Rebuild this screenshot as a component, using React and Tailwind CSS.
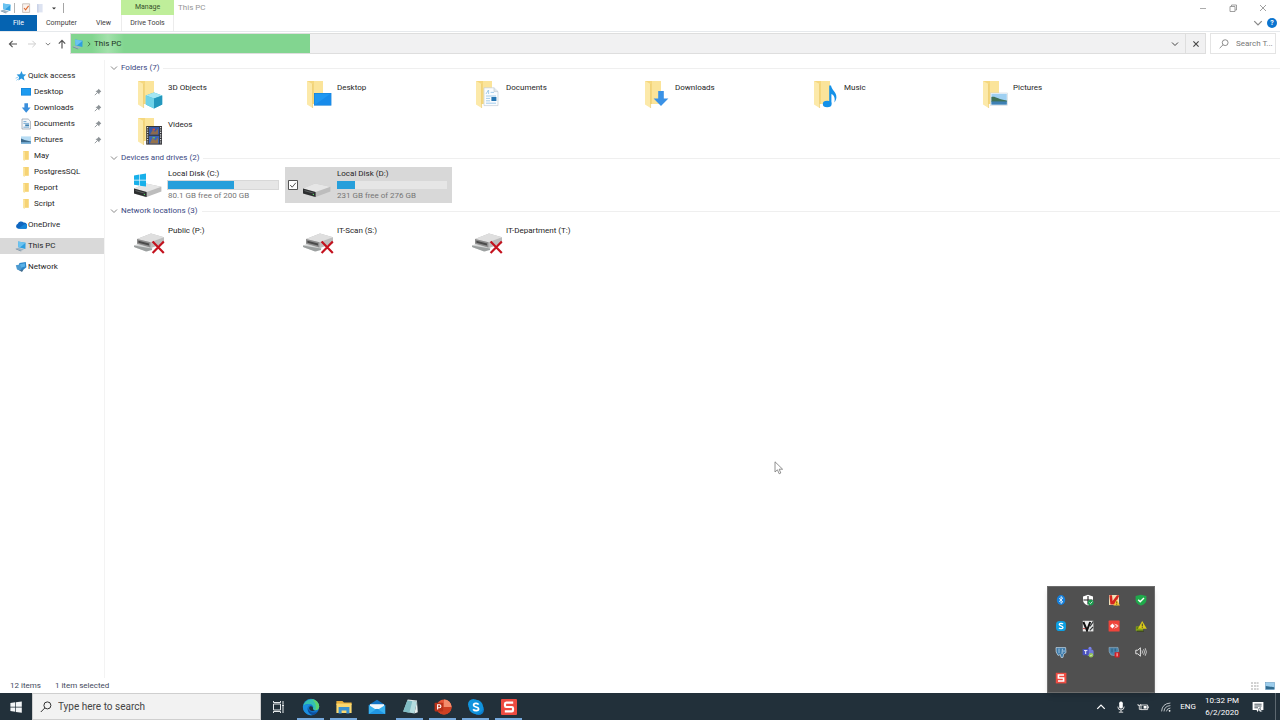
import React, { useState } from 'react';

/* ---------- Small icons ---------- */

const PcIcon = ({ className = 'w-3 h-3' }) => (
  <svg viewBox="0 0 12 12" className={className} aria-hidden="true">
    <path d="M3 1.4 10.6 2.8 10.4 9 3.4 7.2z" fill="#2f9fe0" />
    <path d="M3 1.4 10.6 2.8 5 7.5 3.4 7.2z" fill="#6cc3f0" />
    <path d="M.8 8.6 3.4 7.8 9 9.4 6.2 10.8z" fill="#9fb4c4" />
    <path d="M.8 8.6 6.2 10.8V11.4L.8 9.2z" fill="#6f8aa0" />
  </svg>
);

const Chevron = ({ className }) => (
  <svg viewBox="0 0 8 8" className={className} fill="none" stroke="currentColor" aria-hidden="true">
    <path d="M1 2.5 4 5.5 7 2.5" />
  </svg>
);

const Magnifier = ({ className }) => (
  <svg viewBox="0 0 12 12" className={className} fill="none" stroke="currentColor" aria-hidden="true">
    <circle cx="7.4" cy="4.4" r="3.5" />
    <path d="M4.9 6.9 .8 11" />
  </svg>
);

const Pin = () => (
  <svg viewBox="0 0 8 8" className="w-2 h-2" aria-hidden="true">
    <path d="M4.6.8 7.3 3.4 6.5 3.9 5.4 5.1 5.3 6.6 1.5 3 3 2.8 4.2 1.6z" fill="#8d9397" />
    <path d="M3.4 4.6.8 7.2" stroke="#8d9397" strokeWidth=".9" />
  </svg>
);

const sideIcons = {
  star: (
    <>
      <path d="M6.5 1 7.8 4.2 11.2 4.5 8.7 6.8 9.5 10.4 6.3 8.5 3.4 10.4 4 7 1.6 4.6 5 4.2z" fill="#2a97de" />
      <path d="M.6 8.2 3 7.2M1.4 10.4 3.4 8.8" stroke="#7cc0ee" strokeWidth=".8" />
    </>
  ),
  desktop: (
    <>
      <rect x="1" y="2" width="10" height="7.6" fill="#1487dc" />
      <rect x="1.8" y="2.8" width="8.4" height="6" fill="#1e9bf0" />
    </>
  ),
  downloads: <path d="M4.4 1.2H8V5.6H10.6L6.2 10.8 1.8 5.6H4.4z" fill="#3a8fdc" />,
  documents: (
    <>
      <path d="M2 1H8.2L10.4 3.2V11H2z" fill="#f4f7fa" stroke="#8c9aa6" strokeWidth=".7" />
      <path d="M3.4 3.6H6.4M3.4 5.4H9M3.4 9.2H9" stroke="#5e9ccc" strokeWidth=".8" />
      <path d="M5.2 6.4H9V8.2H5.2z" fill="#3f7fae" />
    </>
  ),
  pictures: (
    <>
      <rect x="1" y="2.4" width="10" height="7.4" fill="#b7dcf4" />
      <path d="M1 4.6 4.6 6 11 7.4V8.4H1z" fill="#3c6a8c" />
      <path d="M1 8.4 11 8V9.8H1z" fill="#6ba6cf" />
    </>
  ),
  folder: (
    <>
      <path d="M3 1H8.8V9.8H3z" fill="#f6d374" />
      <path d="M3 1 4.8 1.8V11L3 9.9z" fill="#fbe5a0" />
    </>
  ),
  onedrive: (
    <>
      <path d="M3.2 9.8A2.6 2.6 0 0 1 2.8 4.8 3.4 3.4 0 0 1 8.6 3.6 3.2 3.2 0 0 1 10 9.8z" fill="#0f66c0" />
      <path d="M3.4 9.8 8.6 5.8A2.4 2.4 0 1 1 9.6 9.8z" fill="#1484d8" />
    </>
  ),
  network: (
    <>
      <path d="M4.4 2 10.8 1 11.4 6.2 7.4 9.4 3.2 8z" fill="#2b86c8" />
      <path d="M5 3.2 9.8 2.2 10.2 5.6 5.4 7z" fill="#59b1e8" />
      <path d="M.8 4.2 4.6 3.6 6.6 7.4 5 9.8 2 8.4z" fill="#4d9ad0" />
      <path d="M4 9.2 8.6 8.4 7 11z" fill="#426f92" />
    </>
  ),
};

const SideIcon = ({ name }) =>
  name === 'pc' ? (
    <PcIcon className="w-3 h-3 shrink-0" />
  ) : (
    <svg viewBox="0 0 12 12" className="w-3 h-3 shrink-0" aria-hidden="true">
      {sideIcons[name]}
    </svg>
  );

/* ---------- Large icons, 32 x 32 ---------- */

const overlays = {
  objects: (
    <>
      <path d="M21 12.4 29.2 15.4V24.6L21 28.4 12.8 24.6V15.4z" fill="#35b6d8" />
      <path d="M21 12.4 29.2 15.4 21 18.6 12.8 15.4z" fill="#a4e6f3" />
      <path d="M12.8 15.4 21 18.6V28.4L12.8 24.6z" fill="#6fd2e8" />
      <path d="M21 18.6 29.2 15.4V24.6L21 28.4z" fill="#2497bd" />
    </>
  ),
  desktop: (
    <>
      <rect x="12" y="13" width="17.4" height="12.6" fill="#1580d8" />
      <path d="M12.6 13.6H28.8V25H12.6z" fill="#1f98f2" />
      <path d="M12.6 25 28.8 13.6V25z" fill="#178bea" />
    </>
  ),
  documents: (
    <>
      <path d="M13 7.8H23L27 11.6V25.6H13z" fill="#fafcfe" stroke="#bcc6ce" strokeWidth=".6" />
      <path d="M23 7.8V11.6H27" fill="#e2e8ec" stroke="#bcc6ce" strokeWidth=".6" />
      <path d="M15 14 17.4 10M17.6 14V10M19.6 12.4H23M15 16H25M15 18.4H19M15 20.8H19M15 23.2H25" stroke="#8dc0e6" strokeWidth=".8" />
      <rect x="20.4" y="17" width="5" height="4" fill="#2777b4" />
    </>
  ),
  downloads: <path d="M18.2 11H23.8V18.6H28.4L21 26 13.6 18.6H18.2z" fill="#3a92e6" />,
  music: (
    <>
      <path d="M20.2 5.4H22C22.6 10 27.8 12 27.4 17.4 27.2 19.4 26.4 21 25.4 22.4 26.4 18 25 15 22.4 14V23.8H20.2z" fill="#1591e8" />
      <ellipse cx="18.2" cy="24" rx="4.4" ry="3.3" fill="#1591e8" />
    </>
  ),
  pictures: (
    <>
      <rect x="12.6" y="13" width="17" height="12.4" fill="#fff" stroke="#c4ccd2" strokeWidth=".5" />
      <rect x="13.4" y="13.8" width="15.4" height="10.8" fill="#9fd0f2" />
      <path d="M13.4 17C17 15.6 20 19.4 28.8 20.4V22H13.4z" fill="#3f7258" />
      <path d="M13.4 21.4H28.8V24.6H13.4z" fill="#3e80b4" />
    </>
  ),
  videos: (
    <>
      <rect x="13.2" y="9" width="15.8" height="18.6" fill="#353539" />
      <path d="M14.6 10V27M27.6 10V27" stroke="#d9dde0" strokeWidth="1.2" strokeDasharray="1.2 1.2" />
      <rect x="16" y="10" width="10.2" height="7.6" fill="#3558a8" />
      <rect x="16" y="18.8" width="10.2" height="7.8" fill="#3a64b8" />
      <path d="M17 17.6 20 12.6 22 15 25 11.6V17.6z" fill="#8a6a50" />
      <path d="M17 26.6 19.4 21 22.6 23.4 25 20.4V26.6z" fill="#94724c" />
      <path d="M19.6 11.6H22V13.4H19.6z" fill="#d04a3c" />
      <path d="M19.6 20H22V21.4H19.6z" fill="#6fb35c" />
    </>
  ),
};

const FolderIcon = ({ kind }) => (
  <svg viewBox="0 0 32 32" className="w-8 h-8" aria-hidden="true">
    <path d="M5 1H21V24H5z" fill="#f5d77e" />
    <path d="M12 1H21V24H12z" fill="#fbe49a" />
    <path d="M5 1 10.6 4V28L5 24.6z" fill="#fce9a9" />
    <path d="M10.6 4V28" stroke="#e8c262" strokeWidth=".6" />
    {overlays[kind]}
  </svg>
);

const DriveIcon = ({ windows }) => (
  <svg viewBox="0 0 32 32" className="w-8 h-8" aria-hidden="true">
    <path d="M2 19.6 14 14.4 29.4 17.8V22.4L14 28.2 2 24.4z" fill="#bdbdbd" />
    <path d="M2 19.6 14 14.4 29.4 17.8 14.6 23z" fill="#e6e6e6" />
    <path d="M2 19.6 14.6 23V28L2 24.6z" fill="#2c2e2f" />
    <path d="M3.4 21.6 12.8 24.2" stroke="#6a6d6f" strokeWidth=".8" />
    <rect x="11.8" y="25" width="1.2" height="1" fill="#54d862" />
    {windows && (
      <path d="M2 6.6 7.4 5.6V10.8H2zM8 5.5 14 4.4V10.8H8zM2 11.4H7.4V16.6L2 15.7zM8 11.4H14V17.6L8 16.7z" fill="#18b0ea" />
    )}
  </svg>
);

const NetworkDriveIcon = () => (
  <svg viewBox="0 -2 32 32" className="w-8 h-8" aria-hidden="true">
    <path d="M1 20.4 5 19 20 23 14.4 26.4 2 22.6z" fill="#d6d8d8" />
    <path d="M1 20.4V22L13 26.6 19 25V23.4z" fill="#9ca0a0" />
    <path d="M4 14 18 8.4 31 12.2V18.4L18 23 4 19z" fill="#bdbdbd" />
    <path d="M4 14 18 8.4 31 12.2 17.4 17.2z" fill="#dfdfdf" />
    <path d="M4 14 17.4 17.2V22.6L4 18.6z" fill="#8c8c8c" />
    <path d="M5.4 15.8 16 18.4V20.4L5.4 17.8z" fill="#4a4a4a" />
    <path d="M19.6 16.6 30.8 28M30.8 16.6 19.6 28" stroke="#c4121e" strokeWidth="2.2" />
  </svg>
);

/* ---------- Data ---------- */

const quickAccess = [
  { label: 'Desktop', icon: 'desktop', pinned: true },
  { label: 'Downloads', icon: 'downloads', pinned: true },
  { label: 'Documents', icon: 'documents', pinned: true },
  { label: 'Pictures', icon: 'pictures', pinned: true },
  { label: 'May', icon: 'folder' },
  { label: 'PostgresSQL', icon: 'folder' },
  { label: 'Report', icon: 'folder' },
  { label: 'Script', icon: 'folder' },
];

const folders = [
  { label: '3D Objects', kind: 'objects' },
  { label: 'Desktop', kind: 'desktop' },
  { label: 'Documents', kind: 'documents' },
  { label: 'Downloads', kind: 'downloads' },
  { label: 'Music', kind: 'music' },
  { label: 'Pictures', kind: 'pictures' },
  { label: 'Videos', kind: 'videos' },
];

const drives = [
  { label: 'Local Disk (C:)', free: '80.1 GB free of 200 GB', used: 60, windows: true },
  { label: 'Local Disk (D:)', free: '231 GB free of 276 GB', used: 16 },
];

const networkDrives = ['Public (P:)', 'IT-Scan (S:)', 'IT-Department (T:)'];

const trayIcons = [
  {
    name: 'Bluetooth',
    art: (
      <>
        <ellipse cx="6" cy="6" rx="4.2" ry="5" fill="#1580dc" />
        <path d="M4 4.2 7.8 7.8 6 9.4V2.6L7.8 4.2 4 7.8" fill="none" stroke="#fff" strokeWidth=".8" />
      </>
    ),
  },
  {
    name: 'Windows Security',
    art: (
      <>
        <path d="M6 .8 11 2.4V6C11 9 8.4 10.6 6 11.4 3.6 10.6 1 9 1 6V2.4z" fill="#fff" />
        <path d="M6 2V10.4M1.4 6H10.4" stroke="#222" strokeWidth="1.1" />
        <circle cx="8.8" cy="8.6" r="2.9" fill="#189a4c" />
        <path d="M7.4 8.6 8.5 9.7 10.4 7.5" fill="none" stroke="#fff" strokeWidth=".8" />
      </>
    ),
  },
  {
    name: 'Antivirus',
    art: (
      <>
        <rect x="1" y="1" width="10" height="10" fill="#f1dfb8" />
        <path d="M1.4 1.2H4L4.6 7 9 1.2H11.4L7 10.6H2.4z" fill="#d6251e" />
        <path d="M8.6 5.6 12 11.4H5.4z" fill="#f2c336" />
        <path d="M8.7 7.4V9.4M8.7 10V10.8" stroke="#5a4300" strokeWidth=".8" />
      </>
    ),
  },
  {
    name: 'Protection active',
    art: (
      <>
        <path d="M6 .8 11.4 2V6C11.4 9 8.6 10.6 6 11.6 3.4 10.6.6 9 .6 6V2z" fill="#1faa4b" />
        <path d="M3.2 5.8 5.2 7.8 9 4" fill="none" stroke="#fff" strokeWidth="1.4" />
      </>
    ),
  },
  {
    name: 'Skype',
    art: (
      <>
        <rect x="1" y="1" width="10" height="10" rx="3.6" fill="#0c9fe2" />
        <path d="M8 4.2C7.2 3 4.2 3 4.2 4.6 4.2 6.2 8 5.6 8 7.4 8 9 4.8 9 4 7.8" fill="none" stroke="#fff" strokeWidth="1.3" />
      </>
    ),
  },
  {
    name: 'VNC',
    art: (
      <>
        <rect x=".8" y=".8" width="10.6" height="10.6" fill="#e9e9e9" />
        <path d="M1.4 2 5 10.4 8.2 2" fill="none" stroke="#111" strokeWidth="2" />
        <path d="M8 6.4 11.4 1.4M7.8 10.4 11 7" stroke="#36393a" strokeWidth="1.2" />
        <path d="M1 8.6H3.4" stroke="#bb4444" strokeWidth="1" />
      </>
    ),
  },
  {
    name: 'Remote desktop',
    art: (
      <>
        <rect x=".6" y=".6" width="11" height="11" rx=".6" fill="#ef443b" />
        <path d="M4.4 3.6 6.8 6 4.4 8.4 2 6z" fill="#fff" />
        <path d="M6.6 3.8 8.8 6 6.6 8.2M8.4 4.2 10.2 6 8.4 7.8" fill="none" stroke="#fff" strokeWidth=".8" />
      </>
    ),
  },
  {
    name: 'Server monitor',
    art: (
      <>
        <path d="M.8 6.4H8V10.8H.8z" fill="#83a516" />
        <path d="M1.6 8H6M2 11.2H9" stroke="#38470d" strokeWidth=".9" />
        <path d="M7.2 1 11.8 8.8H2.8z" fill="#d9c91a" />
        <path d="M7.3 3.6V6.4M7.3 7.2V8.1" stroke="#333" strokeWidth=".9" />
      </>
    ),
  },
  {
    name: 'PostgreSQL',
    art: (
      <>
        <path d="M1 1.6H10.6L11 6.6 8.6 8.2 8 11.4H6L5.4 8.6 3 9.4 1.2 6z" fill="#3b79a9" stroke="#cfe0ec" strokeWidth=".7" />
        <path d="M4 2.6V7.2M7.4 2.8 7 8M9 4.2V6.2" stroke="#d9e8f2" strokeWidth=".7" fill="none" />
      </>
    ),
  },
  {
    name: 'Teams',
    art: (
      <>
        <circle cx="8" cy="2.4" r="1.6" fill="#7b83eb" />
        <rect x="5" y="3.6" width="6.6" height="6.4" rx="2" fill="#7178dc" />
        <rect x=".6" y="3" width="6.2" height="6.2" rx=".6" fill="#4a52bd" />
        <path d="M2 4.6H5.4M3.7 4.6V8" stroke="#fff" strokeWidth=".9" />
        <circle cx="9" cy="9.2" r="2.3" fill="#91c353" />
        <path d="M7.9 9.2 8.8 10 10.2 8.4" fill="none" stroke="#fff" strokeWidth=".6" />
      </>
    ),
  },
  {
    name: 'Database service',
    art: (
      <>
        <path d="M1 1.4H10L10.6 5.4 7.6 7.4 6.6 9.6 3 9 1.2 6z" fill="#4a83ab" stroke="#a6c2d4" strokeWidth=".5" />
        <path d="M4 2.6V6.4M7.2 2.6V5.4" stroke="#23546f" strokeWidth=".8" />
        <rect x="6.6" y="6.2" width="5" height="5.2" rx=".6" fill="#d41f24" />
        <path d="M9.1 7.2V10.4" stroke="#fff" strokeWidth=".8" />
      </>
    ),
  },
  {
    name: 'Volume',
    art: (
      <>
        <path d="M.8 4.2H2.8L5.4 1.8V10.2L2.8 7.8H.8z" fill="none" stroke="#f2f2f2" strokeWidth=".9" />
        <path d="M7 4.4Q8 6 7 7.6M8.6 3.2Q10.4 6 8.6 8.8M10.2 2.2Q12.6 6 10.2 9.8" fill="none" stroke="#e0e0e0" strokeWidth=".8" />
      </>
    ),
  },
  {
    name: 'Snagit',
    art: (
      <>
        <rect x=".8" y=".8" width="10.6" height="10.6" fill="#ee4b41" />
        <path d="M9 3H3.4V6H8.6V9H3" fill="none" stroke="#fff" strokeWidth="1.6" />
      </>
    ),
  },
];

const taskbarApps = [
  {
    name: 'Task view',
    art: (
      <g fill="none" stroke="#e6eaec" strokeWidth="1">
        <path d="M5.5 7H12.5V13H5.5zM5.5 4V5.5H12.5V4M5.5 16V14.5H12.5V16M15 4V7.4M15 10V16" />
        <path d="M14 8.6H16" strokeWidth="1.8" />
      </g>
    ),
  },
  {
    name: 'Edge',
    running: true,
    art: (
      <>
        <circle cx="10" cy="10" r="8.2" fill="#1273c9" />
        <path d="M2 9A8.2 8.2 0 0 1 18.2 9.6C18.2 12 16.4 13.2 14.4 13.2 12.4 13.2 11.6 12.4 12 11.4 13 9.4 11 7 8 7 5 7 2.8 8.4 2 9z" fill="#35c1b1" />
        <path d="M10.6 1.9A8.2 8.2 0 0 1 18.2 9.6C18.2 12 16.4 13.2 14.4 13.2 16 9 14 4 10.6 1.9z" fill="#5fd36b" />
        <path d="M7 9.8C5.4 13 8 17.2 12 18A8.2 8.2 0 0 1 2 9C4 7 9 6 10.6 8 9 8 7.6 8.6 7 9.8z" fill="#1b8fe0" />
        <path d="M7 10.4C7 14 11 16.6 16.4 15A8.2 8.2 0 0 1 12 18C8 17.2 6 13.4 7 10.4z" fill="#0e4e9e" />
        <path d="M8.2 10.4C9 8.4 12 9 12 11.4 11.6 12.6 13 13.2 14.4 13.2 11 15 7.8 13.4 8.2 10.4z" fill="#20313b" />
      </>
    ),
  },
  {
    name: 'File Explorer',
    running: true,
    art: (
      <>
        <path d="M2.4 4H8.4L10 5.6H17.6V8H2.4z" fill="#e8ae3c" />
        <path d="M2.4 6.6H17.6V16H2.4z" fill="#fcd86f" />
        <path d="M4.6 10H15.4V16.6H12.4V13.4H7.6V16.6H4.6z" fill="#3b92d2" />
      </>
    ),
  },
  {
    name: 'Mail',
    art: (
      <>
        <path d="M1.8 8 10 2.8 18.2 8V17H1.8z" fill="#1273c4" />
        <path d="M3 7.2H17V12H3z" fill="#f2f7fb" />
        <path d="M1.8 8 10 13.2 18.2 8V17H1.8z" fill="#39b2f0" />
        <path d="M1.8 17 10 11.8 18.2 17z" fill="#2196e3" />
      </>
    ),
  },
  {
    name: 'Notepad',
    running: true,
    art: (
      <>
        <path d="M7.4 3.2 17 4.4 14.4 16.6 3.2 14.6z" fill="#b4dcdf" />
        <path d="M7.4 3.2 12.4 3.8 9.4 15.7 3.2 14.6z" fill="#80bcc4" />
        <path d="M17 4.4 17.8 15.2 14.4 16.6z" fill="#e8eeee" />
        <path d="M7.6 3 17 4.2" stroke="#dfe9e9" strokeWidth="1.2" />
      </>
    ),
  },
  {
    name: 'PowerPoint',
    running: true,
    art: (
      <>
        <circle cx="11" cy="10" r="7.6" fill="#e8593a" />
        <path d="M11 2.4A7.6 7.6 0 0 1 18.6 10H11z" fill="#f48c6c" />
        <path d="M3.4 10H18.6A7.6 7.6 0 0 1 3.4 10z" fill="#cf4023" />
        <rect x="1.6" y="5.8" width="8.6" height="8.6" rx=".8" fill="#b9321a" />
        <path d="M4.6 12.6V7.8H6.4A1.5 1.5 0 0 1 6.4 10.8H4.6" fill="none" stroke="#fff" strokeWidth="1.1" />
      </>
    ),
  },
  {
    name: 'Skype',
    running: true,
    art: (
      <>
        <circle cx="7.4" cy="7.4" r="5.4" fill="#1295dd" />
        <circle cx="12.6" cy="12.6" r="5.4" fill="#0c7fd0" />
        <circle cx="10" cy="10" r="7.2" fill="#1194de" />
        <path d="M12.6 7.6C11.6 5.8 7.6 6 7.6 8.2 7.6 10.6 12.6 9.4 12.6 12 12.6 14.2 8.4 14.2 7.2 12.2" fill="none" stroke="#fff" strokeWidth="1.7" />
      </>
    ),
  },
  {
    name: 'Snagit',
    running: true,
    art: (
      <>
        <rect x="2" y="2" width="16" height="16" rx="1" fill="#ee4b41" />
        <path d="M14.2 5.6H7.2Q6 5.6 6 7V8.6Q6 10 7.2 10H12.8Q14 10 14 11.2V13Q14 14.4 12.8 14.4H5.8" fill="none" stroke="#fff" strokeWidth="2.2" />
      </>
    ),
  },
];

/* ---------- Pieces of the window ---------- */

const TitleBar = () => (
  <header className="border-b border-[#e6e9ec]">
    <div className="flex h-[15px]">
      <div className="flex w-[121px] items-center">
        <PcIcon />
        <span className="ml-0.5 h-2.5 w-px bg-[#b5b5b5]" />
        <button aria-label="Properties" className="ml-1.5">
          <svg viewBox="0 0 10 10" className="w-2.5 h-2.5">
            <path d="M1.6 .8H8.6V9.4H1.6z" fill="#fbf3ee" stroke="#b9aca4" strokeWidth=".7" />
            <path d="M3 5 4.6 6.8 7.6 2.8" fill="none" stroke="#dd6a30" strokeWidth="1.1" />
          </svg>
        </button>
        <button aria-label="New folder" className="ml-1">
          <svg viewBox="0 0 10 10" className="w-2.5 h-2.5">
            <path d="M2 1H7.6V9.4H2z" fill="#dde3f1" />
            <path d="M2 1 3.6 1.6V9.8L2 9.2z" fill="#c9d2e8" />
          </svg>
        </button>
        <button aria-label="Customize toolbar" className="ml-1.5">
          <svg viewBox="0 0 6 6" className="w-1.5 h-1.5">
            <path d="M1 2.4H5L3 4.6z" fill="#333" />
          </svg>
        </button>
        <span className="ml-1.5 h-2.5 w-px bg-[#a5a5a5]" />
      </div>
      <div className="flex w-[53px] items-center justify-center bg-[#bfee9a] text-[7px] text-[#35502a]">Manage</div>
      <h1 className="flex flex-1 items-center pl-1 text-[#969696]">This PC</h1>
      <div className="flex items-center gap-5 pr-3 text-[#888]">
        <button aria-label="Minimize">
          <svg viewBox="0 0 10 10" className="w-2.5 h-2.5" stroke="currentColor">
            <path d="M2 5.5H8" strokeWidth=".7" />
          </svg>
        </button>
        <button aria-label="Restore">
          <svg viewBox="0 0 10 10" className="w-2.5 h-2.5" fill="none" stroke="currentColor" strokeWidth=".8">
            <path d="M2 3.5H7V8.5H2zM3.5 3.4V2H8.5V7H7.2" />
          </svg>
        </button>
        <button aria-label="Close">
          <svg viewBox="0 0 10 10" className="w-2.5 h-2.5" stroke="currentColor" strokeWidth=".8">
            <path d="M2 2 8 8M8 2 2 8" />
          </svg>
        </button>
      </div>
    </div>
    <nav className="flex h-4 items-stretch text-[7px] text-[#3c3c3c]">
      <button className="w-[37px] bg-[#0563b1] text-white">File</button>
      <button className="w-[49px]">Computer</button>
      <button className="w-[35px]">View</button>
      <button className="w-[53px] border-x border-[#ececec]">Drive Tools</button>
      <div className="flex flex-1 items-center justify-end gap-1 pr-[3px]">
        <button aria-label="Expand the ribbon">
          <Chevron className="w-2.5 h-2.5 text-[#888]" />
        </button>
        <button aria-label="Help" className="flex h-2.5 w-2.5 items-center justify-center rounded-full bg-[#0b74cf] font-bold text-white">
          ?
        </button>
      </div>
    </nav>
  </header>
);

const AddressBar = () => (
  <div className="flex h-[22px] items-stretch pt-px pr-1">
    <div className="flex w-[70px] items-center pl-2 text-[#555]">
      <button aria-label="Back">
        <svg viewBox="0 0 10 10" className="w-2.5 h-2.5" fill="none" stroke="currentColor" strokeWidth="1.1">
          <path d="M9 5H1.4M4.6 1.8 1.4 5 4.6 8.2" />
        </svg>
      </button>
      <button aria-label="Forward" className="ml-[9px] text-[#cfcfcf]">
        <svg viewBox="0 0 10 10" className="w-2.5 h-2.5" fill="none" stroke="currentColor">
          <path d="M1 5H8.6M5.4 1.8 8.6 5 5.4 8.2" />
        </svg>
      </button>
      <button aria-label="Recent locations" className="ml-2">
        <Chevron className="w-1.5 h-1.5" />
      </button>
      <button aria-label="Up" className="ml-1.5">
        <svg viewBox="0 0 10 10" className="w-2.5 h-2.5" fill="none" stroke="currentColor" strokeWidth="1.2">
          <path d="M5 9.4V1.4M1.8 4.6 5 1.4 8.2 4.6" />
        </svg>
      </button>
    </div>
    <div className="flex flex-1 border border-[#dedede] bg-[#f1f1f2]">
      <div className="flex flex-1">
        <div className="flex w-[239px] items-center bg-[#82d590] pl-px text-[#1d3122]">
          <PcIcon />
          <svg viewBox="0 0 8 8" className="ml-0.5 w-1.5 h-1.5" fill="none" stroke="#3c6e47" strokeWidth="1.2">
            <path d="M2.5 1 5.5 4 2.5 7" />
          </svg>
          <button className="h-full bg-linear-to-r from-[#82d590] via-[#a2e1ab] to-[#82d590] px-0.5">This PC</button>
        </div>
      </div>
      <button aria-label="Previous locations" className="flex w-5 items-center justify-center text-[#444]">
        <Chevron className="w-2 h-2" />
      </button>
      <button aria-label="Stop loading" className="flex w-5 items-center justify-center border-l border-[#dedede] text-[#444]">
        <svg viewBox="0 0 8 8" className="w-2 h-2" stroke="currentColor" strokeWidth="1.1">
          <path d="M1.4 1.4 6.6 6.6M6.6 1.4 1.4 6.6" />
        </svg>
      </button>
    </div>
    <label className="ml-1 flex w-[66px] items-center border border-[#e4e4e4] pl-2 text-[#777]">
      <Magnifier className="w-2.5 h-2.5 shrink-0" />
      <input
        type="text"
        aria-label="Search This PC"
        placeholder="Search T..."
        className="ml-[7px] w-full min-w-0 bg-transparent placeholder:text-[#777] outline-none"
      />
    </label>
  </div>
);

const SideItem = ({ icon, label, pinned, nested, active }) => (
  <a
    href="#"
    className={`flex h-4 items-center pr-0.5 ${nested ? 'pl-5' : 'pl-[15px]'} ${active ? 'bg-[#d9d9d9]' : ''}`}
  >
    <SideIcon name={icon} />
    <span className={`flex-1 ${nested ? 'pl-0.5' : 'pl-px'}`}>{label}</span>
    {pinned && <Pin />}
  </a>
);

const Sidebar = () => (
  <nav className="flex w-[105px] flex-col gap-[5px] border-r border-[#f3f3f3] pt-2">
    <div>
      <SideItem icon="star" label="Quick access" />
      {quickAccess.map((item) => (
        <SideItem key={item.label} {...item} nested />
      ))}
    </div>
    <SideItem icon="onedrive" label="OneDrive" />
    <SideItem icon="pc" label="This PC" active />
    <SideItem icon="network" label="Network" />
  </nav>
);

const Section = ({ title, children }) => (
  <section>
    <h2 className="mb-px flex h-4 items-center text-[#39477f]">
      <Chevron className="mr-[3px] w-2 h-2 text-[#8a8a8a]" />
      {title}
      <span className="ml-1 h-px flex-1 bg-[#efefef]" />
    </h2>
    <div className="grid grid-cols-[repeat(auto-fill,169px)] gap-y-px pl-1.5">{children}</div>
  </section>
);

const Tile = ({ icon, label }) => (
  <div className="flex h-9 items-start pl-[17px] pt-[3px]">
    {icon}
    <span className="pl-[3px] pt-1">{label}</span>
  </div>
);

const DriveTile = ({ drive, selected, onToggle }) => (
  <div className={`mr-0.5 flex h-9 items-center ${selected ? 'bg-[#d8d8d8]' : ''}`}>
    <label className="flex w-4 justify-center">
      <input
        type="checkbox"
        aria-label={`Select ${drive.label}`}
        checked={selected}
        onChange={onToggle}
        className="peer sr-only"
      />
      <svg viewBox="0 0 10 10" className="invisible w-2.5 h-2.5 peer-checked:visible" fill="none" stroke="#444">
        <path d="M.5 .5H9.5V9.5H.5z" fill="#fff" strokeWidth=".9" />
        <path d="M2.2 5 4.2 7.2 7.8 2.8" strokeWidth=".9" />
      </svg>
    </label>
    <DriveIcon windows={drive.windows} />
    <div className="flex flex-1 flex-col pl-[3px] pr-1">
      <span className="pl-px leading-3">{drive.label}</span>
      <div className="h-2.5 border border-[#d8d8d8] bg-[#e6e6e6]">
        <div className="h-full bg-[#269fdb]" style={{ width: `${drive.used}%` }} />
      </div>
      <span className="pl-px leading-3 text-[#757575]">{drive.free}</span>
    </div>
  </div>
);

const TrayFlyout = () => (
  <div className="absolute right-[125px] bottom-full grid w-[108px] grid-cols-4 border border-[#6c6c6c] bg-[#505050] pb-px shadow-md">
    {trayIcons.map(({ name, art }) => (
      <button key={name} aria-label={name} className="flex h-[26px] items-center justify-center">
        <svg viewBox="0 0 12 12" className="w-3 h-3">
          {art}
        </svg>
      </button>
    ))}
  </div>
);

const Taskbar = () => (
  <footer className="relative flex h-[27px] items-stretch bg-[#22303a] text-white">
    <TrayFlyout />
    <button aria-label="Start" className="flex w-8 items-center justify-center">
      <svg viewBox="0 0 12 12" className="w-3 h-3" fill="#f4f6f7">
        <path d="M.4 2 5.2 1.3V5.7H.4zM5.9 1.2 11.8.4V5.7H5.9zM.4 6.4H5.2V10.8L.4 10.1zM5.9 6.4H11.8V11.8L5.9 10.9z" />
      </svg>
    </button>
    <label className="flex w-[229px] items-center border border-[#cfcfcf] bg-[#f2f2f2] pl-[7px] text-[#333]">
      <Magnifier className="w-3 h-3 shrink-0" />
      <input
        type="text"
        aria-label="Search Windows"
        placeholder="Type here to search"
        className="ml-1.5 w-full min-w-0 bg-transparent text-[10px] placeholder:text-[#444] outline-none"
      />
    </label>
    {taskbarApps.map(({ name, running, art }) => (
      <button key={name} aria-label={name} className="flex w-[33px] flex-col items-center justify-between pt-1">
        <svg viewBox="0 0 20 20" className="w-5 h-5 shrink-0">
          {art}
        </svg>
        <span className={`h-0.5 w-[27px] ${running ? 'bg-[#76a9dc]' : ''}`} />
      </button>
    ))}
    <div className="ml-auto flex items-center">
      <button aria-label="Show hidden icons" className="w-5">
        <Chevron className="mx-auto w-2.5 h-2.5 rotate-180" />
      </button>
      <button aria-label="Microphone" className="w-5">
        <svg viewBox="0 0 12 12" className="mx-auto w-3 h-3">
          <rect x="4.2" y=".6" width="3.6" height="7" rx="1.6" fill="#fff" />
          <path d="M2.8 5.6Q2.8 9 6 9 9.2 9 9.2 5.6M6 9V11M3.8 11.2H8.2" fill="none" stroke="#e8e8e8" strokeWidth=".9" />
        </svg>
      </button>
      <button aria-label="Battery" className="w-6">
        <svg viewBox="0 0 12 12" className="mx-auto w-3 h-3" fill="none" stroke="#e8e8e8" strokeWidth=".9">
          <path d="M4 4H10.6V8.6H4zM11.4 5.4V7.2" />
          <path d="M1 3V4.4H3.6V3M2.3 4.6V8.4H4" />
          <path d="M6.6 5H9.6V7.6H6.6z" fill="#fff" stroke="none" />
        </svg>
      </button>
      <button aria-label="Wireless network" className="w-[22px]">
        <svg viewBox="0 0 12 12" className="mx-auto w-3 h-3" fill="none" stroke="#c9cfd3" strokeWidth=".9">
          <path d="M1.6 10.4Q2 2.6 10.4 2M4 10.4Q4.4 5 10.4 4.6M6.4 10.4Q6.8 7.4 10.4 7" />
          <circle cx="9.6" cy="9.8" r=".9" fill="#fff" stroke="none" />
        </svg>
      </button>
      <button className="w-[22px]">ENG</button>
      <button className="w-[46px] leading-3">
        10:32 PM
        <br />
        6/2/2020
      </button>
      <button aria-label="Notifications" className="w-[26px]">
        <svg viewBox="0 0 12 12" className="mx-auto w-3 h-3">
          <path d="M.6 1H11.4V9H7L5.4 11 4.6 9H.6z" fill="#fff" />
          <path d="M2.4 3.2H9.6M2.4 5H9.6M2.4 6.8H6" stroke="#22303a" strokeWidth=".8" />
          <path d="M8.6 6.6A2.2 2.2 0 1 0 10.8 9.6 2 2 0 0 1 8.6 6.6z" fill="#dde2e5" stroke="#22303a" strokeWidth=".5" />
        </svg>
      </button>
      <button aria-label="Show desktop" className="ml-1 h-full w-[5px] self-stretch border-l border-[#5d6870]" />
    </div>
  </footer>
);

const App = () => {
  const [selected, setSelected] = useState('Local Disk (D:)');

  return (
    <div className="relative flex min-h-screen flex-col bg-white font-['Roboto','Open_Sans',sans-serif] text-[8px] leading-none text-[#262626]">
      <TitleBar />
      <AddressBar />

      {/* Navigation pane and file list */}
      <div className="flex flex-1 pt-1.5">
        <Sidebar />
        <main className="flex-1 pl-[5px]">
          <Section title="Folders (7)">
            {folders.map(({ label, kind }) => (
              <Tile key={label} label={label} icon={<FolderIcon kind={kind} />} />
            ))}
          </Section>
          <Section title="Devices and drives (2)">
            {drives.map((drive) => (
              <DriveTile
                key={drive.label}
                drive={drive}
                selected={selected === drive.label}
                onToggle={() => setSelected(selected === drive.label ? null : drive.label)}
              />
            ))}
          </Section>
          <Section title="Network locations (3)">
            {networkDrives.map((label) => (
              <Tile key={label} label={label} icon={<NetworkDriveIcon />} />
            ))}
          </Section>
        </main>
      </div>

      {/* Status bar */}
      <div className="flex h-[15px] items-center gap-[14px] pl-2.5 pr-[5px] text-[#3f4a5c]">
        <span>12 items</span>
        <span>1 item selected</span>
        <div className="ml-auto flex gap-[5px]">
          <button aria-label="Details view">
            <svg viewBox="0 0 10 10" className="w-2.5 h-2.5" stroke="#9a9a9a" strokeWidth=".9">
              <path d="M1 2H3M4 2H9M1 5H3M4 5H9M1 8H3M4 8H9" strokeDasharray="2 .6" />
            </svg>
          </button>
          <button aria-label="Large icons view">
            <svg viewBox="0 0 10 10" className="w-2.5 h-2.5">
              <rect x=".5" y="1.5" width="9" height="7" fill="#9ccdec" stroke="#6d9fc4" strokeWidth=".6" />
              <path d="M.8 5 9.2 6.2V8.2H.8z" fill="#2f6a8e" />
            </svg>
          </button>
        </div>
      </div>

      <Taskbar />

      {/* Mouse pointer */}
      <svg viewBox="0 0 10 14" className="pointer-events-none absolute top-[461px] left-[774px] h-3.5 w-2.5" aria-hidden="true">
        <path d="M1 .8V11L3.4 8.8 5.2 12.8 6.8 12 5.2 8.2H8.6z" fill="#fff" stroke="#777" strokeWidth=".8" />
      </svg>
    </div>
  );
};

export default App;
